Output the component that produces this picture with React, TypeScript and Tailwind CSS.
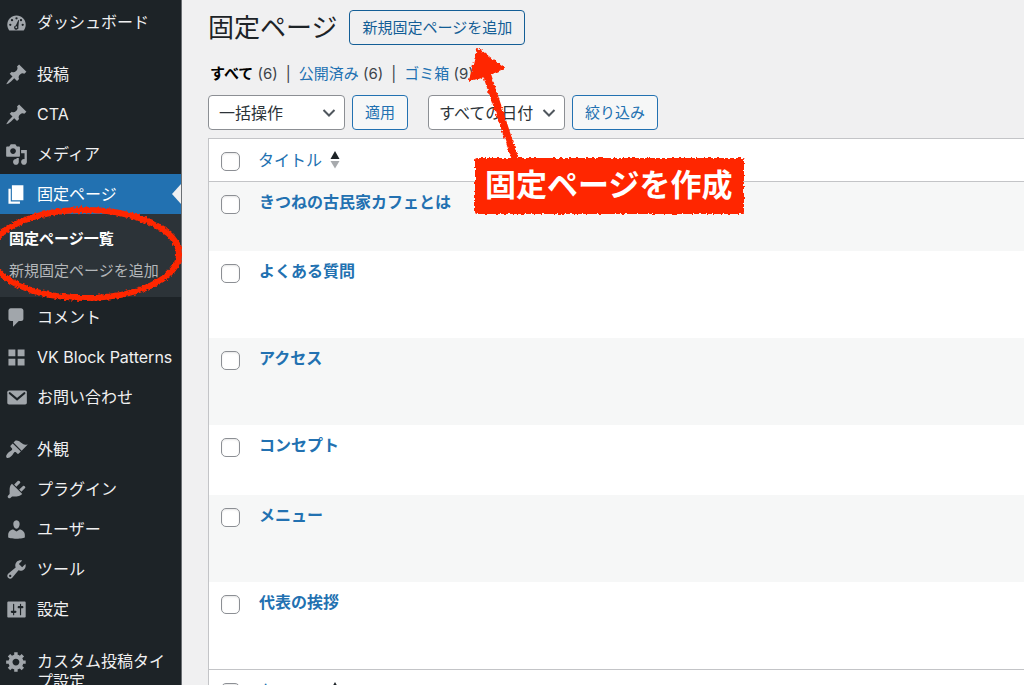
import type { ReactNode } from "react";

type IconName =
  | "dashboard"
  | "pin"
  | "media"
  | "page"
  | "comment"
  | "grid"
  | "mail"
  | "brush"
  | "plug"
  | "user"
  | "wrench"
  | "sliders"
  | "gear";

const iconShapes: Record<IconName, ReactNode> = {
  dashboard: (
    <>
      <path d="M3.76 17h12.48c1.1-1.37 1.76-3.11 1.76-5 0-4.42-3.58-8-8-8s-8 3.58-8 8c0 1.89.66 3.63 1.76 5z" />
      <g className="fill-[#1d2327]">
        <circle cx="10" cy="6.4" r="1" />
        <circle cx="6.1" cy="8" r="1" />
        <circle cx="13.9" cy="8" r="1" />
        <circle cx="4.6" cy="12" r="1" />
        <circle cx="15.4" cy="12" r="1" />
        <path d="M11.6 7.8l.6.2-.6 5.600a1.900 1.900 0 1 1-2.200-1.100z" />
      </g>
      <circle cx="9.8" cy="14.1" r=".8" />
    </>
  ),
  pin: (
    <path d="M10.44 3.02l1.82-1.82 6.36 6.35-1.83 1.82c-1.05-.68-2.48-.57-3.41.36l-.75.75c-.92.93-1.04 2.35-.35 3.41l-1.83 1.82-2.41-2.41-2.8 2.79c-.42.42-3.38 2.71-3.8 2.29s1.86-3.39 2.28-3.81l2.79-2.79L4.1 9.36l1.83-1.82c1.05.69 2.48.57 3.4-.36l.75-.75c.93-.92 1.05-2.35.36-3.41z" />
  ),
  media: (
    <path d="M13 11V4c0-.55-.45-1-1-1h-1.67L9 1H5L3.67 3H2c-.55 0-1 .45-1 1v7c0 .55.45 1 1 1h10c.55 0 1-.45 1-1zM7 4.5c1.38 0 2.5 1.12 2.5 2.5S8.38 9.5 7 9.5 4.5 8.38 4.5 7 5.62 4.5 7 4.5zM14 6h5v10.5c0 1.38-1.12 2.5-2.5 2.5S14 17.88 14 16.5s1.12-2.5 2.5-2.5c.17 0 .34.02.5.05V9h-3V6zm-4 8.05V13h2v3.5c0 1.38-1.12 2.5-2.5 2.5S7 17.88 7 16.5 8.12 14 9.5 14c.17 0 .34.02.5.05z" />
  ),
  page: <path d="M6 15V2h10v13H6zm-1 1h8v2H3V5h2v11z" />,
  comment: (
    <path d="M5 2h9c1.1 0 2 .9 2 2v7c0 1.1-.9 2-2 2h-2l-5 5v-5H5c-1.1 0-2-.9-2-2V4c0-1.1.9-2 2-2z" />
  ),
  grid: <path d="M9 9V3H3v6h6zm8 0V3h-6v6h6zm-8 8v-6H3v6h6zm8 0v-6h-6v6h6z" />,
  mail: (
    <>
      <path d="M3.5 4h14c.83 0 1.5.67 1.5 1.5v9c0 .83-.67 1.5-1.5 1.5h-14C2.67 16 2 15.33 2 14.5v-9C2 4.67 2.67 4 3.5 4z" />
      <path
        d="M4.2 6.3l6.3 5.2 6.3-5.2"
        fill="none"
        className="stroke-[#1d2327]"
        strokeWidth="1.9"
        strokeLinecap="round"
      />
    </>
  ),
  brush: (
    <path d="M14.48 11.06L7.41 3.99l1.5-1.5c.5-.56 2.3-.47 3.51.32 1.21.8 1.43 1.28 2.91 2.1 1.18.64 2.45 1.26 4.45.85zm-.71.71L6.7 4.7 4.93 6.47c-.39.39-.39 1.02 0 1.41l1.06 1.06c.39.39.39 1.03 0 1.42-.6.6-1.43 1.11-2.21 1.69-.35.26-.7.53-1.01.84C1.43 14.23.4 16.08 1.4 17.07c.99 1 2.84-.03 4.18-1.36.31-.31.58-.66.85-1.02.57-.78 1.08-1.61 1.69-2.21.39-.39 1.02-.39 1.41 0l1.06 1.06c.39.39 1.02.39 1.41 0z" />
  ),
  plug: (
    <path d="M13.11 4.36L9.87 7.6 8 5.73l3.24-3.24c.35-.34 1.05-.2 1.56.32.52.51.66 1.21.31 1.55zm-8 1.77l.91-1.12 9.01 9.01-1.19.84c-.71.71-2.63 1.16-3.82 1.16H6.14L4.9 17.26c-.59.59-1.54.59-2.12 0-.59-.58-.59-1.53 0-2.12l1.24-1.24v-3.88c0-1.13.4-3.19 1.09-3.89zm7.26 3.97l3.24-3.24c.34-.35 1.04-.21 1.55.31.52.51.66 1.21.31 1.55l-3.24 3.25z" />
  ),
  user: (
    <path d="M10 9.25c-2.27 0-2.73-3.44-2.73-3.44C7 4.02 7.82 2 9.97 2c2.16 0 2.98 2.02 2.71 3.81 0 0-.41 3.44-2.68 3.44zm0 2.57L12.72 10c2.39 0 4.52 2.33 4.52 4.53v2.49s-3.65 1.13-7.24 1.13c-3.65 0-7.24-1.13-7.24-1.13v-2.49c0-2.25 1.94-4.48 4.47-4.48z" />
  ),
  wrench: (
    <path d="M16.68 9.77c-1.34 1.34-3.3 1.67-4.95.99l-5.41 6.52c-.99.99-2.59.99-3.58 0s-.99-2.59 0-3.57l6.52-5.42c-.68-1.65-.35-3.61.99-4.95 1.28-1.28 3.12-1.62 4.72-1.06l-2.89 2.89 2.82 2.82 2.86-2.87c.53 1.58.18 3.39-1.08 4.65zM3.81 16.21c.4.39 1.04.39 1.43 0 .4-.4.4-1.04 0-1.43-.39-.4-1.03-.4-1.43 0-.39.39-.39 1.03 0 1.43z" />
  ),
  sliders: (
    <path d="M18 16V4c0-.55-.45-1-1-1H3c-.55 0-1 .45-1 1v12c0 .55.45 1 1 1h14c.55 0 1-.45 1-1zM8 11h1c.55 0 1 .45 1 1s-.45 1-1 1H8v1.5c0 .28-.22.5-.5.5s-.5-.22-.5-.5V13H6c-.55 0-1-.45-1-1s.45-1 1-1h1V5.5c0-.28.22-.5.5-.5s.5.22.5.5V11zm5-2h-1c-.55 0-1-.45-1-1s.45-1 1-1h1V5.5c0-.28.22-.5.5-.5s.5.22.5.5V7h1c.55 0 1 .45 1 1s-.45 1-1 1h-1v5.5c0 .28-.22.5-.5.5s-.5-.22-.5-.5V9z" />
  ),
  gear: (
    <path d="M18 12h-2.18c-.17.7-.44 1.35-.81 1.93l1.54 1.54-2.1 2.1-1.54-1.54c-.58.36-1.23.63-1.91.79V19H8v-2.18c-.68-.16-1.33-.43-1.91-.79l-1.54 1.54-2.12-2.12 1.54-1.54c-.36-.58-.63-1.23-.79-1.91H1V9.03h2.17c.16-.7.44-1.35.8-1.94L2.43 5.55l2.1-2.1 1.54 1.54c.58-.37 1.24-.64 1.93-.81V2h3v2.18c.68.16 1.33.43 1.91.79l1.54-1.54 2.12 2.12-1.54 1.54c.36.59.64 1.24.8 1.94H18V12zm-8.5 1.5c1.66 0 3-1.34 3-3s-1.34-3-3-3-3 1.34-3 3 1.34 3 3 3z" />
  ),
};

function Icon({ name }: { name: IconName }) {
  return (
    <svg viewBox="0 0 20 20" className="size-[23px] shrink-0" fill="currentColor" aria-hidden="true">
      {iconShapes[name]}
    </svg>
  );
}

type MenuItem = { label: string; icon: IconName; children?: string[] };

const menuGroups: MenuItem[][] = [
  [{ label: "ダッシュボード", icon: "dashboard" }],
  [
    { label: "投稿", icon: "pin" },
    { label: "CTA", icon: "pin" },
    { label: "メディア", icon: "media" },
    { label: "固定ページ", icon: "page", children: ["固定ページ一覧", "新規固定ページを追加"] },
    { label: "コメント", icon: "comment" },
    { label: "VK Block Patterns", icon: "grid" },
    { label: "お問い合わせ", icon: "mail" },
  ],
  [
    { label: "外観", icon: "brush" },
    { label: "プラグイン", icon: "plug" },
    { label: "ユーザー", icon: "user" },
    { label: "ツール", icon: "wrench" },
    { label: "設定", icon: "sliders" },
  ],
  [{ label: "カスタム投稿タイプ設定", icon: "gear" }],
];

function MenuEntry({ item }: { item: MenuItem }) {
  if (item.children) {
    return (
      <li>
        <a href="#pages" className="relative flex gap-[9px] bg-[#2271b1] py-[10px] pr-1 pl-[5px] text-white">
          <span className="flex h-5 items-center">
            <Icon name={item.icon} />
          </span>
          <span>{item.label}</span>
          <svg viewBox="0 0 9 20" className="absolute top-[10px] right-0 h-5 w-[9px] fill-[#f0f0f1]" aria-hidden="true">
            <path d="M9 0v20L0 10z" />
          </svg>
        </a>
        <ul className="flex flex-col gap-3 bg-[#2c3338] pt-[15px] pb-4 text-[15px]">
          {item.children.map((child, index) => (
            <li key={child}>
              <a
                href="#pages"
                className={index === 0 ? "block pl-[9px] font-bold text-white" : "block pl-[9px] text-[#b4b7ba]"}
              >
                {child}
              </a>
            </li>
          ))}
        </ul>
      </li>
    );
  }
  return (
    <li>
      <a href="#menu" className="flex gap-[9px] py-[10px] pr-1 pl-[5px] text-[#f0f0f1]">
        <span className="flex h-5 items-center text-[#a1a6ab]">
          <Icon name={item.icon} />
        </span>
        <span className="break-all">{item.label}</span>
      </a>
    </li>
  );
}

function Sidebar() {
  return (
    <nav
      aria-label="メインメニュー"
      className="flex w-[182px] shrink-0 flex-col gap-3 border-r border-[#6b6f73] bg-[#1d2327] pt-[2px] text-base leading-5"
    >
      {menuGroups.map((group) => (
        <ul key={group[0].label}>
          {group.map((item) => (
            <MenuEntry key={item.label} item={item} />
          ))}
        </ul>
      ))}
    </nav>
  );
}

function Select({ label, value }: { label: string; value: string }) {
  return (
    <div className="relative w-[137px]">
      <select
        aria-label={label}
        className="h-[35px] w-full appearance-none rounded-[4px] border border-[#8c8f94] bg-white pr-7 pl-[10px] text-base leading-5 text-[#2c3338]"
      >
        <option>{value}</option>
      </select>
      <svg
        viewBox="0 0 14 10"
        className="pointer-events-none absolute top-[13px] right-[9px] h-[10px] w-[14px] stroke-[#50575e]"
        fill="none"
        strokeWidth="2"
        aria-hidden="true"
      >
        <path d="M1.5 2l5.5 5.5L12.5 2" />
      </svg>
    </div>
  );
}

function ActionButton({ children }: { children: ReactNode }) {
  return (
    <button
      type="button"
      className="h-[35px] rounded-[4px] border border-[#2271b1] bg-[#f6f7f7] px-3 text-[15px] leading-5 text-[#2271b1]"
    >
      {children}
    </button>
  );
}

function CheckBox({ label }: { label: string }) {
  return (
    <input
      type="checkbox"
      aria-label={label}
      className="block size-[19px] appearance-none rounded-[5px] border border-[#8c8f94] bg-white shadow-[inset_0_1px_2px_rgba(0,0,0,0.1)] checked:bg-[#2271b1]"
    />
  );
}

function HeadingRow() {
  return (
    <tr className="h-[42px] align-top">
      <th scope="col" className="w-12 pt-[13px] pl-3">
        <CheckBox label="すべて選択" />
      </th>
      <th scope="col" className="pt-[11px] pl-px text-left font-normal">
        <a href="#sort" className="flex items-center gap-2 text-base leading-5 text-[#2271b1]">
          タイトル
          <svg viewBox="0 0 10 18" className="h-[18px] w-[10px]" aria-hidden="true">
            <path d="M5 0l4.5 8h-9z" className="fill-[#1d2327]" />
            <path d="M5 17.5l4.5-7.5h-9z" className="fill-[#a7aaad]" />
          </svg>
        </a>
      </th>
    </tr>
  );
}

const pages = [
  { title: "きつねの古民家カフェとは", tall: false },
  { title: "よくある質問", tall: true },
  { title: "アクセス", tall: true },
  { title: "コンセプト", tall: false },
  { title: "メニュー", tall: true },
  { title: "代表の挨拶", tall: true },
];

const filters = [
  { label: "公開済み", count: 6 },
  { label: "ゴミ箱", count: 9 },
];

function Callout() {
  return (
    <div className="pointer-events-none absolute top-[157px] left-[475px]">
      <svg
        viewBox="0 0 290 180"
        className="absolute -top-[117px] -left-[10px] h-[180px] w-[290px] max-w-none fill-[#ff2600]"
        aria-hidden="true"
      >
        <g filter="url(#rough)">
          <path d="M13 9l25 19-13 6 28 86h-5L19 36 5 40z" stroke="#ff2600" strokeWidth="2" strokeLinejoin="round" />
          <rect x="10" y="118" width="269" height="56" rx="2" />
        </g>
      </svg>
      <p className="relative px-[10px] py-2 text-[31px] leading-10 font-bold whitespace-nowrap text-white">
        固定ページを作成
      </p>
    </div>
  );
}

function MenuHighlight() {
  return (
    <svg
      viewBox="0 0 190 110"
      className="pointer-events-none absolute top-[199px] left-0 h-[110px] w-[190px]"
      aria-hidden="true"
    >
      <defs>
        <filter id="rough" x="-5%" y="-5%" width="110%" height="110%">
          <feTurbulence type="fractalNoise" baseFrequency="0.35" numOctaves="2" seed="4" result="noise" />
          <feDisplacementMap
            in="SourceGraphic"
            in2="noise"
            scale="4"
            xChannelSelector="R"
            yChannelSelector="G"
          />
        </filter>
      </defs>
      <ellipse
        cx="85"
        cy="55"
        rx="94"
        ry="44"
        fill="none"
        stroke="#ff2600"
        strokeWidth="6"
        filter="url(#rough)"
      />
    </svg>
  );
}

export default function App() {
  return (
    <div className="relative flex h-screen overflow-hidden bg-[#f0f0f1] font-['Inter','Noto_Sans_CJK_JP',sans-serif] text-[#3c434a]">
      <Sidebar />
      <main className="min-w-0 flex-1 pl-[26px]">
        <header className="flex items-center gap-3 pt-[10px]">
          <h1 className="text-[26px] leading-[35px] text-[#1d2327]">固定ページ</h1>
          <a
            href="#new"
            className="rounded-[4px] border border-[#135e96] px-3 text-[15px] leading-[33px] text-[#135e96]"
          >
            新規固定ページを追加
          </a>
        </header>

        <ul className="mt-[19px] flex pl-[2px] text-[15px] leading-5">
          <li>
            <a href="#all" className="font-bold text-black">
              すべて
            </a>{" "}
            (6)
          </li>
          {filters.map((filter) => (
            <li key={filter.label}>
              <span className="px-2">|</span>
              <a href="#filter" className="text-[#2271b1]">
                {filter.label}
              </a>{" "}
              ({filter.count})
            </li>
          ))}
        </ul>

        <div className="mt-[11px] flex gap-5">
          <div className="flex gap-[7px]">
            <Select label="一括操作を選択" value="一括操作" />
            <ActionButton>適用</ActionButton>
          </div>
          <div className="flex gap-[7px]">
            <Select label="日付で絞り込む" value="すべての日付" />
            <ActionButton>絞り込み</ActionButton>
          </div>
        </div>

        <div className="mt-2 border-t border-l border-[#c3c4c7] bg-white">
          <table className="w-full border-collapse">
            <thead className="border-b border-[#c3c4c7]">
              <HeadingRow />
            </thead>
            <tbody>
              {pages.map((page) => (
                <tr
                  key={page.title}
                  className={page.tall ? "h-[87px] align-top odd:bg-[#f6f7f7]" : "h-[70px] align-top odd:bg-[#f6f7f7]"}
                >
                  <td className="pt-[13px] pl-3">
                    <CheckBox label={`${page.title}を選択`} />
                  </td>
                  <td className="pt-[10px] pl-[2px]">
                    <a href="#edit" className="block text-base leading-5 font-bold text-[#2271b1]">
                      {page.title}
                    </a>
                  </td>
                </tr>
              ))}
            </tbody>
            <tfoot className="border-t border-[#c3c4c7]">
              <HeadingRow />
            </tfoot>
          </table>
        </div>
      </main>
      <MenuHighlight />
      <Callout />
    </div>
  );
}
